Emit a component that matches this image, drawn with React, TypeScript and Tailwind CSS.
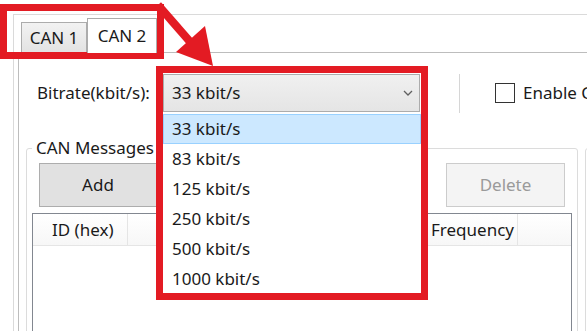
import { useState } from 'react';

const RATES = ['33 kbit/s', '83 kbit/s', '125 kbit/s', '250 kbit/s', '500 kbit/s', '1000 kbit/s'];

export default function App() {
  const [rate, setRate] = useState(RATES[0]);

  return (
    <div className="relative w-[587px] h-[331px] overflow-hidden bg-white text-[17px] text-[#1a1a1a] font-['Noto_Sans','Open_Sans',sans-serif]">
      {/* Window frame */}
      <div className="pt-[14px] pl-[13px] h-full">
        <div className="h-full border-t border-l border-[#dadada] pl-[4px]">
          {/* Tab headers */}
          <div className="flex items-end h-[37px] pl-[3px] relative z-10">
            <div className="h-[30px] w-[66px] flex items-center justify-center border border-b-0 border-[#acacac] bg-gradient-to-b from-[#f2f2f2] to-[#e3e3e3]">
              CAN 1
            </div>
            <div className="h-[35px] w-[70px] -mb-px flex items-center justify-center border border-b-0 border-[#acacac] bg-white">
              CAN 2
            </div>
          </div>

          {/* Tab page */}
          <div className="h-full border-t border-l border-[#bdbdbd]">
            {/* Bitrate row */}
            <div className="flex items-center mt-[21px] pl-[18px] h-[38px]">
              <span className="w-[126px] shrink-0">Bitrate(kbit/s):</span>
              <div className="w-[257px] h-[38px] shrink-0 flex items-center justify-between pl-[8px] pr-[6px] border border-[#acacac] bg-gradient-to-b from-[#f0f0f0] to-[#e5e5e5]">
                <span>{rate}</span>
                <svg width="10" height="8" viewBox="0 0 10 8">
                  <polyline points="1,2 5,6 9,2" fill="none" stroke="#606060" strokeWidth="1.3" />
                </svg>
              </div>
              <div className="w-px h-[39px] ml-[39px] bg-[#d6d6d6] shrink-0" />
              <div className="w-[20px] h-[20px] ml-[35px] border border-[#333333] bg-white shrink-0" />
              <span className="ml-[8px] whitespace-nowrap">Enable CAN</span>
            </div>

            {/* Group boxes */}
            <div className="flex mt-[24px] pl-[7px]">
              <fieldset className="w-[550px] shrink-0 border border-[#dcdcdc] rounded-[3px] px-[5px] pb-0 h-[200px]">
                <legend className="px-[4px] leading-[24px]">CAN Messages</legend>
                <div className="flex justify-between px-[7px] mt-[3px]">
                  <button className="w-[118px] h-[44px] border border-[#adadad] bg-[#e1e1e1]">Add</button>
                  <button className="w-[119px] h-[44px] border border-[#cccccc] bg-[#f4f4f4] text-[#9a9a9a]">Delete</button>
                </div>
                {/* List view */}
                <div className="mt-[6px] border border-[#828790] h-[140px] w-[540px] bg-white">
                  <div className="flex h-[32px] border-b border-[#e5e5e5] bg-gradient-to-b from-white to-[#f7f7f7]">
                    <div className="w-[95px] border-r border-[#e5e5e5] pl-[19px] flex items-center">ID (hex)</div>
                    <div className="w-[152px] border-r border-[#e5e5e5]" />
                    <div className="w-[145px] border-r border-[#e5e5e5]" />
                    <div className="w-[93px] border-r border-[#e5e5e5] pl-[6px] flex items-center">Frequency</div>
                  </div>
                </div>
              </fieldset>
              <fieldset className="w-[200px] ml-[7px] shrink-0 border border-[#dcdcdc] rounded-[3px] h-[200px]">
                <legend className="ml-[4px] px-[4px] leading-[24px] invisible">x</legend>
              </fieldset>
            </div>
          </div>
        </div>
      </div>

      {/* Open dropdown list */}
      <div className="absolute left-[163px] top-[112px] w-[258px] h-[181px] bg-white pt-[2px] shadow-[3px_3px_3px_rgba(0,0,0,0.18)]">
        {RATES.map((r) => (
          <div
            key={r}
            onClick={() => setRate(r)}
            className={`h-[30px] flex items-center pl-[8px] ${
              r === rate ? 'bg-[#cce8ff] border border-[#99d1ff]' : 'border border-transparent'
            }`}
          >
            {r}
          </div>
        ))}
      </div>

      {/* Annotation: red boxes and arrow */}
      <div className="absolute left-0 top-[4px] w-[164px] h-[55px] border-[7px] border-[#e31b23]" />
      <div className="absolute left-[156px] top-[66px] w-[272px] h-[234px] border-[7px] border-[#e31b23]" />
      <svg className="absolute left-0 top-0" width="587" height="331">
        <line x1="158" y1="5" x2="192" y2="44" stroke="#e31b23" strokeWidth="8" />
        <polygon points="213,66 176,52 205,26" fill="#e31b23" />
      </svg>
    </div>
  );
}
